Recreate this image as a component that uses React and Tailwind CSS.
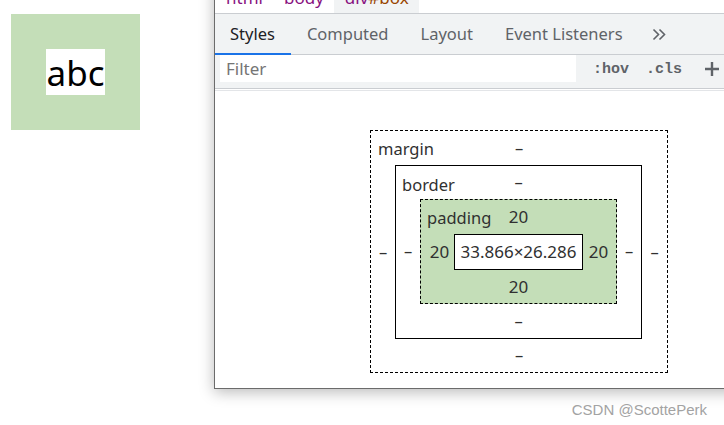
const ui = { fontFamily: '"Noto Sans", "Open Sans", sans-serif' };
const mono = { fontFamily: '"Liberation Mono", "DejaVu Sans Mono", monospace' };

const tabs = ['Styles', 'Computed', 'Layout', 'Event Listeners'];

function Dash() {
  return <span>–</span>;
}

function Side({ children, className = 'w-[24px]' }) {
  return <div className={`${className} flex shrink-0 items-center justify-center`}>{children}</div>;
}

function BoxModel() {
  return (
    <div className="relative flex flex-col border border-dashed border-black text-[16.5px] text-[#303030]">
      <div className="flex h-[34px] items-center justify-center">
        <span className="absolute left-[7px] top-[6px]">margin</span>
        <Dash />
      </div>
      <div className="flex">
        <Side>
          <Dash />
        </Side>
        <div className="relative flex flex-col border border-black">
          <div className="flex h-[33px] items-center justify-center">
            <span className="absolute left-[6px] top-[7px]">border</span>
            <Dash />
          </div>
          <div className="flex">
            <Side>
              <Dash />
            </Side>
            <div className="relative flex flex-col border border-dashed border-black bg-[#c4deb8]">
              <div className="flex h-[34px] items-center justify-center text-[17px]">
                <span className="absolute left-[6px] top-[6px] text-[16.5px]">padding</span>
                <span>20</span>
              </div>
              <div className="flex text-[17px]">
                <Side className="w-[33px] pl-[4px]">20</Side>
                <div className="flex h-[36px] w-[129px] items-center justify-center border border-black bg-white">
                  33.866×26.286
                </div>
                <Side className="w-[33px] pr-[2px]">20</Side>
              </div>
              <div className="flex h-[33px] items-center justify-center text-[17px]">20</div>
            </div>
            <Side>
              <Dash />
            </Side>
          </div>
          <div className="flex h-[34px] items-center justify-center">
            <Dash />
          </div>
        </div>
        <Side className="w-[25px]">
          <Dash />
        </Side>
      </div>
      <div className="flex h-[33px] items-center justify-center">
        <Dash />
      </div>
    </div>
  );
}

function DevToolsPanel() {
  return (
    <div className="ml-[74px] mt-[-17px] w-[620px] shrink-0 border-b border-l border-[#6b6b6b] bg-white shadow-[0_3px_14px_rgba(0,0,0,0.28)]" style={ui}>
      <div className="flex h-[30px] items-center text-[17px]">
        <span className="px-[11px] text-[#881280]">html</span>
        <span className="px-[10px] text-[#881280]">body</span>
        <span className="flex h-full items-center bg-[#f1f3f4] pl-[11px] pr-[10px]">
          <span className="text-[#881280]">div</span>
          <span className="text-[#994500]">#box</span>
        </span>
      </div>
      <div className="flex h-[42px] items-stretch border-y border-[#cacdd1] bg-[#f1f3f4] text-[16.5px]">
        {tabs.map((t, i) => (
          <div
            key={t}
            className={`relative flex items-center ${i === 0 ? 'pl-[15px] pr-[16px] text-[#202124]' : 'px-[16px] text-[#5f6368]'}`}
          >
            {t}
            {i === 0 && <div className="absolute bottom-[-1px] left-0 right-0 h-[2px] bg-[#1a73e8]" />}
          </div>
        ))}
        <div className="flex items-center pl-[13px]">
          <svg width="15" height="13" viewBox="0 0 15 13" fill="none" stroke="#5f6368" strokeWidth="1.6">
            <path d="M1.5 1.5 L6.5 6.5 L1.5 11.5 M7.5 1.5 L12.5 6.5 L7.5 11.5" />
          </svg>
        </div>
      </div>
      <div className="flex h-[34px] items-start border-b border-[#cacdd1] bg-[#f1f3f4]">
        <div className="ml-[5px] flex h-[27px] w-[356px] items-center bg-white pl-[6px] text-[17px] text-[#757575]">
          Filter
        </div>
        <div className="flex h-[27px] items-center pt-[3px] font-bold text-[15px] text-[#5f6368]" style={mono}>
          <span className="ml-[17px]">:hov</span>
          <span className="ml-[17px]">.cls</span>
          <svg className="ml-[22px] mt-[-2px]" width="16" height="16" viewBox="0 0 16 16" stroke="#5f6368" strokeWidth="2.4">
            <path d="M8 1 V15 M1 8 H15" />
          </svg>
        </div>
      </div>
      <div className="mt-[1px] h-[1px] bg-[#e3e5e8]" />
      <div className="pb-[15px] pl-[155px] pt-[39px]">
        <div className="w-[298px]">
          <BoxModel />
        </div>
      </div>
    </div>
  );
}

export default function App() {
  return (
    <div className="h-[425px] w-[724px] overflow-hidden bg-white">
      <div className="flex items-start">
        <div className="ml-[11px] mt-[14px] shrink-0 bg-[#c4deb8] p-[35px]">
          <div className="flex h-[46px] w-[59px] items-center justify-center bg-white text-[35px] leading-none text-black" style={ui}>
            abc
          </div>
        </div>
        <DevToolsPanel />
      </div>
      <div
        className="mt-[11px] pr-[17px] text-right text-[15px] leading-[20px] text-[#a3a3a3]"
        style={{ fontFamily: '"Liberation Sans", Arial, sans-serif' }}
      >
        CSDN @ScottePerk
      </div>
    </div>
  );
}
